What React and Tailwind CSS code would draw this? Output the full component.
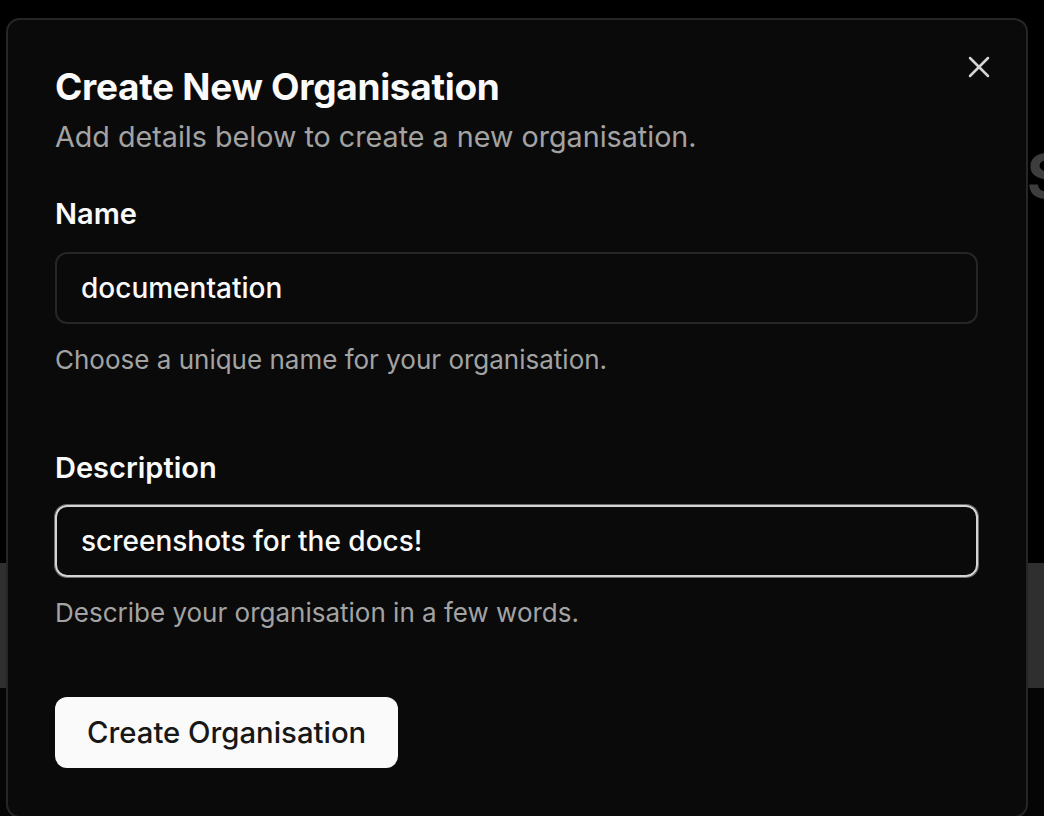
const Field = ({ label, value, hint, focused, labelGap, top }) => {
  return (
    <div className={top}>
      <label className="block text-[29px] font-semibold leading-none text-[#fafafa]">{label}</label>
      <div
        className={
          focused
            ? `${labelGap} flex h-[72px] items-center rounded-[12px] border-2 border-[#d4d4d4] px-[24px] ring-1 ring-[#6b6b6b]`
            : `${labelGap} flex h-[72px] items-center rounded-[12px] border-2 border-[#262626] px-[24px]`
        }
      >
        <span className="text-[28px] font-medium text-[#fafafa]">{value}</span>
      </div>
      <p className="mt-[16px] text-[26px] leading-[40px] text-[#a3a3a3]">{hint}</p>
    </div>
  );
};

const App = () => {
  return (
    <div className="relative h-[816px] w-full overflow-hidden bg-black font-['Inter',sans-serif]">
      {/* page behind the overlay */}
      <div className="flex h-full flex-col">
        <div className="flex h-[563px] justify-end pt-[146px]">
          <span className="mr-[-22px] text-[60px] font-bold leading-none text-[#3d3d3d]">S</span>
        </div>
        <div className="h-[125px] bg-[#2f2f2f]" />
        <div className="flex-1 bg-[#050505]" />
      </div>

      {/* dialog */}
      <div className="absolute left-[6px] top-[18px] h-[800px] w-[1022px] rounded-[14px] border-2 border-[#262626] bg-[#0a0a0a] pl-[47px] pr-[48px] pt-[48px]">
        <button className="absolute right-[36px] top-[36px] text-[#d4d4d4]">
          <svg width="22" height="22" viewBox="0 0 22 22" fill="none" stroke="currentColor" strokeWidth="2.5" strokeLinecap="round">
            <path d="M2 2 20 20" />
            <path d="M20 2 2 20" />
          </svg>
        </button>

        <h2 className="text-[37px] font-bold leading-none tracking-[-0.3px] text-[#fafafa]">Create New Organisation</h2>
        <p className="mt-[12px] text-[28.7px] leading-[40px] text-[#a3a3a3]">Add details below to create a new organisation.</p>

        <Field
          top="mt-[42px]"
          labelGap="mt-[24px]"
          label="Name"
          value="documentation"
          hint="Choose a unique name for your organisation."
        />
        <Field
          top="mt-[73px]"
          labelGap="mt-[23px]"
          label="Description"
          value="screenshots for the docs!"
          hint="Describe your organisation in a few words."
          focused
        />

        <button className="mt-[64px] flex h-[71px] items-center rounded-[12px] bg-[#fafafa] px-[32px] text-[29.3px] font-medium text-[#171717]">
          Create Organisation
        </button>
      </div>
    </div>
  );
};

export default App;
